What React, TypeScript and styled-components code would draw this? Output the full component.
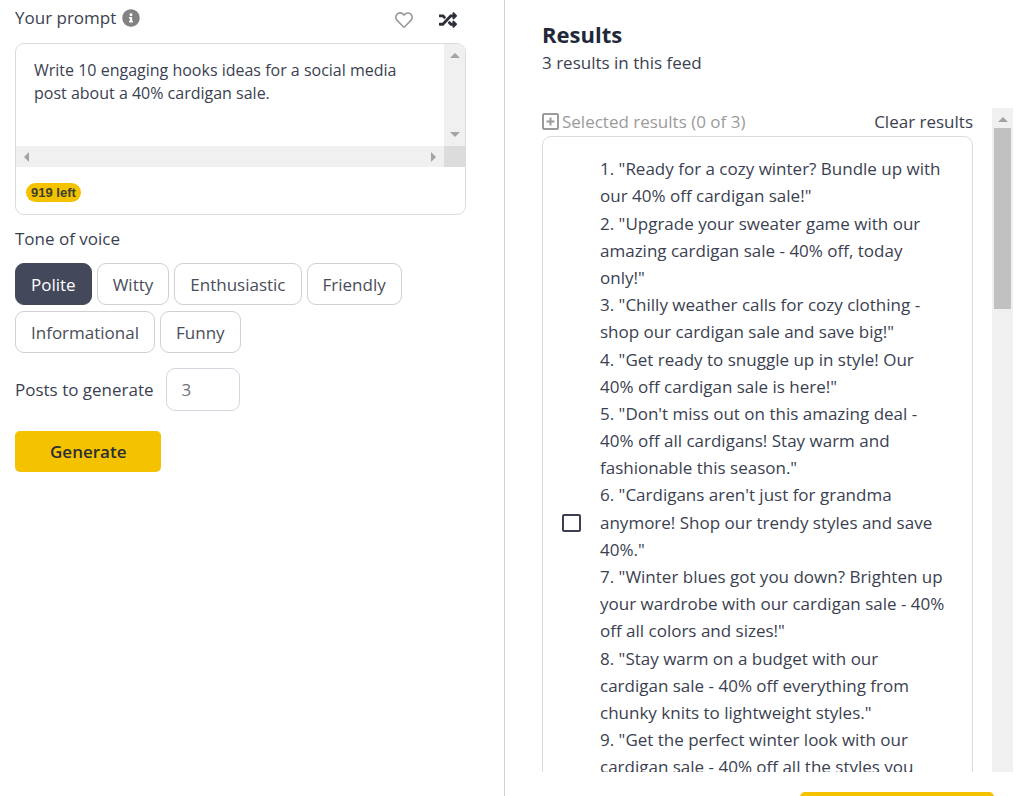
import React, { useState } from "react";
import styled, { createGlobalStyle } from "styled-components";
import { FaInfoCircle, FaRandom, FaRegHeart } from "react-icons/fa";

const GlobalStyle = createGlobalStyle`
  * { box-sizing: border-box; }
  body {
    margin: 0;
    background: #fff;
    color: #3b3f51;
    font-family: "Open Sans", sans-serif;
    font-size: 17px;
    line-height: 1.6;
  }
  button, input, textarea { font: inherit; color: inherit; margin: 0; }
  button { cursor: pointer; }
`;

const Page = styled.div`
  display: grid;
  grid-template-columns: minmax(0, 505fr) minmax(0, 519fr);
  height: 100vh;
  overflow: hidden;
`;

const FormPane = styled.form`
  padding: 3px 38px 0 15px;
  border-right: 1px solid #cfcfcf;
`;

const PromptHeader = styled.div`
  display: flex;
  align-items: center;
  gap: 6px;
  height: 29px;
  margin-bottom: 11px;
`;

const IconButton = styled.button<{ $tone: string }>`
  display: flex;
  padding: 0;
  border: 0;
  background: none;
  color: ${(p) => p.$tone};
`;

const HeaderActions = styled.div`
  display: flex;
  gap: 26px;
  margin-left: auto;
  padding: 4px 9px 0 0;
`;

const PromptBox = styled.div`
  border: 1px solid #dcdcdc;
  border-radius: 9px;
  overflow: hidden;
  margin-bottom: 10px;
`;

const PromptArea = styled.div`
  display: grid;
  grid-template-columns: minmax(0, 1fr) 21px;
  grid-template-rows: 102px 21px;
`;

const PromptInput = styled.textarea`
  display: block;
  width: 100%;
  height: 100%;
  padding: 15px 18px;
  border: 0;
  outline: 0;
  resize: none;
  overflow: hidden;
  background: none;
  font-size: 16px;
  line-height: 23px;
`;

const Track = styled.div<{ $row?: boolean }>`
  display: flex;
  flex-direction: ${(p) => (p.$row ? "row" : "column")};
  justify-content: space-between;
  align-items: center;
  padding: ${(p) => (p.$row ? "0 8px" : "9px 0")};
  background: #f0f0f0;
`;

const TrackCorner = styled.div`
  background: #dcdcdc;
`;

const Arrow = styled.svg`
  display: block;
  flex: none;
  fill: currentColor;
`;

const PromptFooter = styled.div`
  padding: 16px 10px 12px;
`;

const Badge = styled.span`
  display: block;
  width: max-content;
  padding: 0 5px;
  border-radius: 10px;
  background: #f5c200;
  color: #3b3f2e;
  font: bold 13px/19px "Liberation Sans", sans-serif;
`;

const Tones = styled.fieldset`
  display: flex;
  flex-wrap: wrap;
  gap: 6px 5px;
  margin: 0 0 15px;
  padding: 0;
  border: 0;
`;

const Legend = styled.legend`
  margin-bottom: 11px;
  padding: 0;
`;

const ToneButton = styled.button<{ $active: boolean }>`
  height: 42px;
  padding: 0 15px;
  border: 1px solid ${(p) => (p.$active ? "#43485b" : "#d0d0d0")};
  border-radius: 9px;
  background: ${(p) => (p.$active ? "#43485b" : "#fff")};
  color: ${(p) => (p.$active ? "#fff" : "#4a4d5a")};
`;

const CountRow = styled.div`
  display: flex;
  align-items: center;
  gap: 12px;
  margin-bottom: 20px;
`;

const CountInput = styled.input`
  width: 74px;
  height: 43px;
  padding: 0 15px;
  border: 1px solid #d3d8e0;
  border-radius: 9px;
  color: #6f7178;
`;

const GenerateButton = styled.button`
  height: 41px;
  padding: 0 35px;
  border: 0;
  border-radius: 5px;
  background: #f5c200;
  color: #2c2e36;
  font-weight: 600;
`;

const ResultsPane = styled.section`
  padding: 19px 11px 0 37px;
`;

const Title = styled.h2`
  margin: 0;
  color: #22283a;
  font-size: 22px;
  line-height: 30px;
  font-weight: 700;
`;

const Subtitle = styled.p`
  margin: 0 0 32px;
`;

const Viewport = styled.div`
  display: grid;
  grid-template-columns: minmax(0, 1fr) 21px;
  gap: 19px;
  height: calc(100vh - 132px);
  overflow: hidden;
`;

const Toolbar = styled.div`
  display: flex;
  align-items: center;
  justify-content: space-between;
  height: 28px;
  padding-bottom: 2px;
`;

const TextButton = styled.button<{ $muted?: boolean }>`
  display: flex;
  align-items: center;
  gap: 3px;
  padding: 0;
  border: 0;
  background: none;
  color: ${(p) => (p.$muted ? "#9b9b9b" : "inherit")};
`;

const Card = styled.label`
  display: flex;
  gap: 19px;
  min-height: 774px;
  padding: 18px 25px 18px 19px;
  border: 1px solid #dcdcdc;
  border-radius: 9px;
`;

const Checkbox = styled.input`
  appearance: none;
  flex: none;
  align-self: center;
  width: 19px;
  height: 18px;
  margin: 0;
  border: 2px solid #3b3f51;
  border-radius: 2px;
  &:checked { background: #3b3f51; }
`;

const Lines = styled.span`
  display: block;
  flex: 1;
  min-width: 0;
`;

const Line = styled.span`
  display: block;
`;

const ScrollTrack = styled.div`
  display: flex;
  flex-direction: column;
  align-items: center;
  padding: 9px 2px;
  background: #f0f0f0;
`;

const Thumb = styled.div`
  width: 100%;
  height: 181px;
  margin: 6px 0 auto;
  background: #c1c1c1;
`;

const Footer = styled.div`
  display: flex;
  justify-content: flex-end;
  padding: 20px 19px 0 0;
`;

const FooterButton = styled(GenerateButton)`
  width: 194px;
`;

type Direction = "up" | "down" | "left" | "right";

const arrowPoints: Record<Direction, string> = {
  up: "0,5 5,0 10,5",
  down: "0,0 10,0 5,5",
  left: "5,0 0,5 5,10",
  right: "0,0 5,5 0,10",
};

function ScrollArrow({ dir, color = "#a3a3a3" }: { dir: Direction; color?: string }) {
  const vertical = dir === "up" || dir === "down";
  return (
    <Arrow width={vertical ? 10 : 5} height={vertical ? 5 : 10} color={color} aria-hidden="true">
      <polygon points={arrowPoints[dir]} />
    </Arrow>
  );
}

const tones = ["Polite", "Witty", "Enthusiastic", "Friendly", "Informational", "Funny"];

const hooks = [
  'Ready for a cozy winter? Bundle up with our 40% off cardigan sale!"',
  'Upgrade your sweater game with our amazing cardigan sale - 40% off, today only!"',
  'Chilly weather calls for cozy clothing - shop our cardigan sale and save big!"',
  'Get ready to snuggle up in style! Our 40% off cardigan sale is here!"',
  'Don\'t miss out on this amazing deal - 40% off all cardigans! Stay warm and fashionable this season."',
  'Cardigans aren\'t just for grandma anymore! Shop our trendy styles and save 40%."',
  'Winter blues got you down? Brighten up your wardrobe with our cardigan sale - 40% off all colors and sizes!"',
  'Stay warm on a budget with our cardigan sale - 40% off everything from chunky knits to lightweight styles."',
  "Get the perfect winter look with our cardigan sale - 40% off all the styles you",
];

export default function App() {
  const [tone, setTone] = useState("Polite");

  return (
    <>
      <GlobalStyle />
      <Page>
        <FormPane onSubmit={(e) => e.preventDefault()}>
          <PromptHeader>
            <label htmlFor="prompt">Your prompt</label>
            <IconButton type="button" $tone="#828282" aria-label="About prompts">
              <FaInfoCircle size={18} />
            </IconButton>
            <HeaderActions>
              <IconButton type="button" $tone="#9b9b9b" aria-label="Save prompt">
                <FaRegHeart size={18} />
              </IconButton>
              <IconButton type="button" $tone="#2c2f3a" aria-label="Random prompt">
                <FaRandom size={18} />
              </IconButton>
            </HeaderActions>
          </PromptHeader>

          <PromptBox>
            <PromptArea>
              <PromptInput
                id="prompt"
                defaultValue="Write 10 engaging hooks ideas for a social media post about a 40% cardigan sale."
              />
              <Track>
                <ScrollArrow dir="up" />
                <ScrollArrow dir="down" />
              </Track>
              <Track $row>
                <ScrollArrow dir="left" />
                <ScrollArrow dir="right" />
              </Track>
              <TrackCorner />
            </PromptArea>
            <PromptFooter>
              <Badge>919 left</Badge>
            </PromptFooter>
          </PromptBox>

          <Tones>
            <Legend>Tone of voice</Legend>
            {tones.map((name) => (
              <ToneButton
                key={name}
                type="button"
                $active={name === tone}
                aria-pressed={name === tone}
                onClick={() => setTone(name)}
              >
                {name}
              </ToneButton>
            ))}
          </Tones>

          <CountRow>
            <label htmlFor="count">Posts to generate</label>
            <CountInput id="count" inputMode="numeric" defaultValue="3" />
          </CountRow>

          <GenerateButton type="submit">Generate</GenerateButton>
        </FormPane>

        <ResultsPane>
          <Title>Results</Title>
          <Subtitle>3 results in this feed</Subtitle>
          <Viewport>
            <div>
              <Toolbar>
                <TextButton type="button" $muted>
                  <svg width="17" height="17" fill="none" stroke="currentColor" strokeWidth="2" aria-hidden="true">
                    <rect x="1" y="1" width="15" height="15" rx="1" />
                    <path d="M8.5 4.5v8M4.5 8.5h8" />
                  </svg>
                  Selected results (0 of 3)
                </TextButton>
                <TextButton type="button">Clear results</TextButton>
              </Toolbar>
              <Card>
                <Checkbox type="checkbox" />
                <Lines>
                  {hooks.map((text, i) => (
                    <Line key={i}>{`${i + 1}. "${text}`}</Line>
                  ))}
                </Lines>
              </Card>
            </div>
            <ScrollTrack>
              <ScrollArrow dir="up" />
              <Thumb />
              <ScrollArrow dir="down" color="#505050" />
            </ScrollTrack>
          </Viewport>
          <Footer>
            <FooterButton type="button" aria-label="Save selected results" />
          </Footer>
        </ResultsPane>
      </Page>
    </>
  );
}
